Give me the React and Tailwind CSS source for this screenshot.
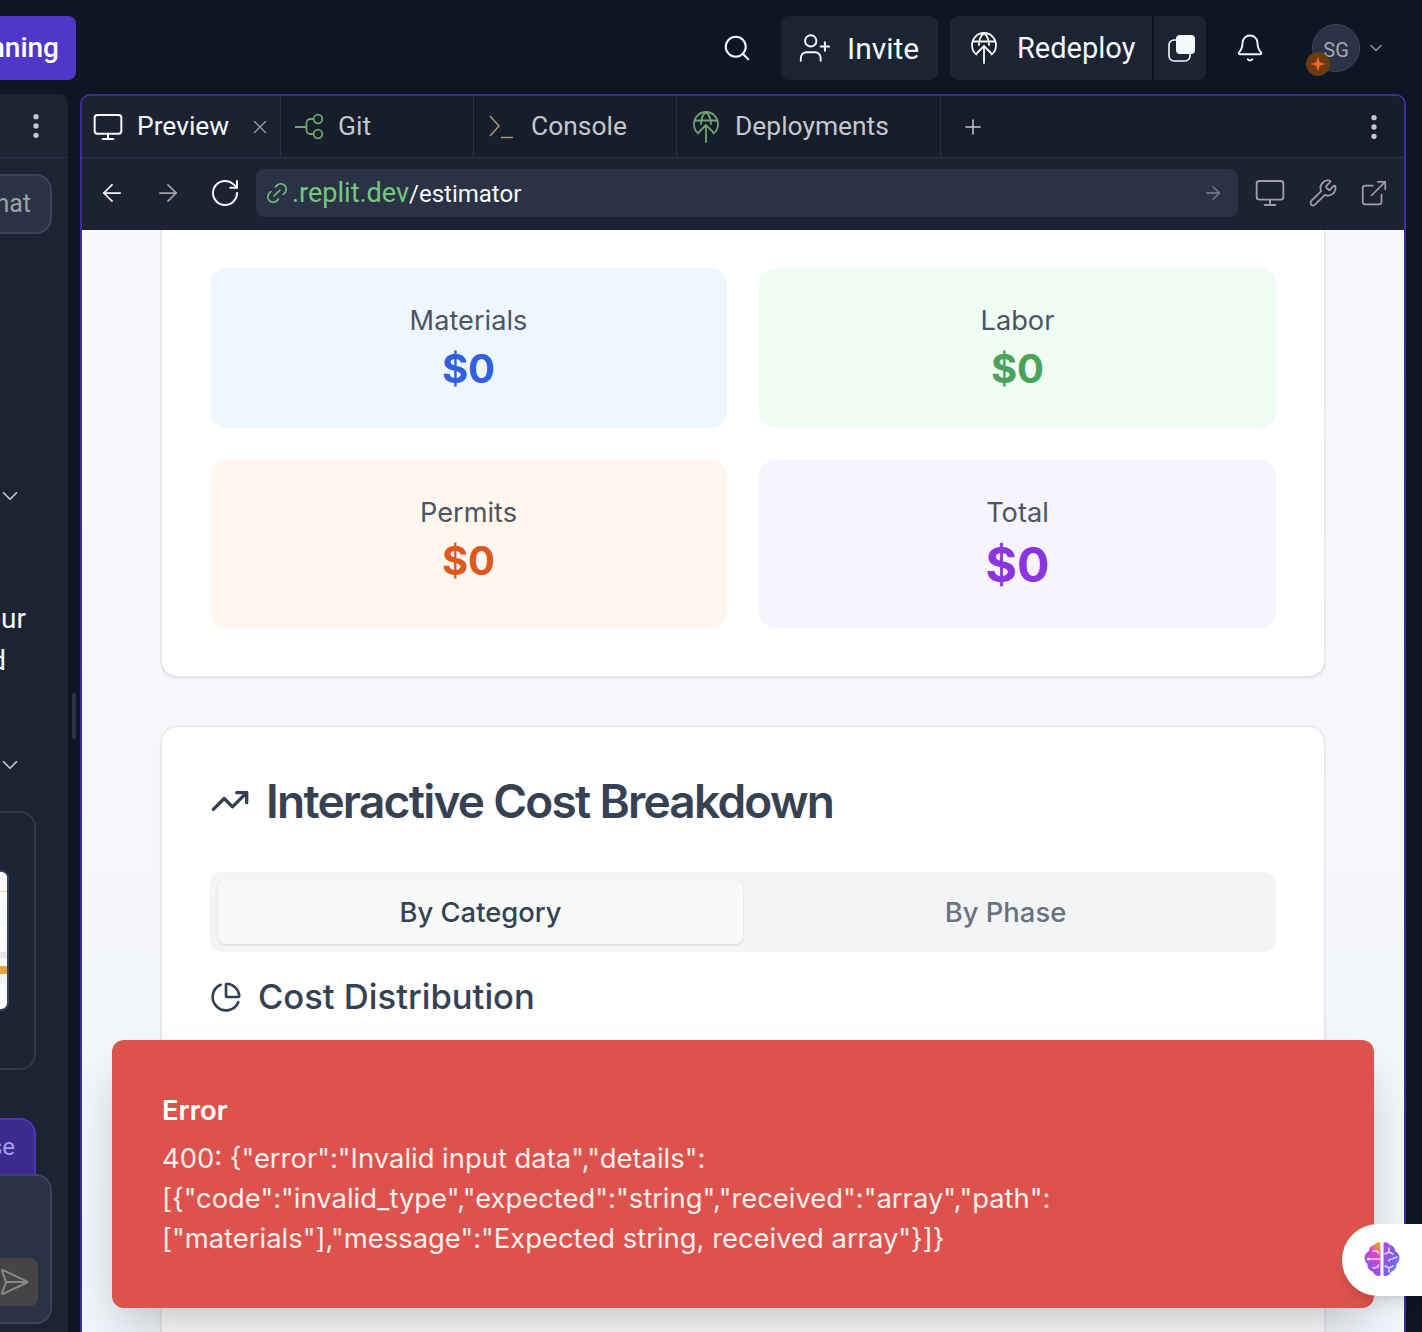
import React from "react";
import { Search, X, Plus, MoreVertical, ArrowLeft, ArrowRight, RotateCw, Link2, Monitor, Wrench, ExternalLink, Bell, ChevronDown, TrendingUp, PieChart, SendHorizontal, UserPlus } from "lucide-react";

const ui = { fontFamily: "Roboto, 'Noto Sans', sans-serif" };
const inter = { fontFamily: "Inter, sans-serif" };

function GitIcon() {
  return (
    <svg width="32" height="32" viewBox="0 0 32 32" fill="none" stroke="#6ea572" strokeWidth="1.8">
      <path d="M2 16h11.500M20.500 8h-3a4 4 0 0 0-4 4v7a4 4 0 0 0 4 4h3" />
      <circle cx="25" cy="8" r="4.300" />
      <circle cx="25" cy="23" r="4.300" />
    </svg>
  );
}

function ConsoleIcon() {
  return (
    <svg width="28" height="28" viewBox="0 0 28 28" fill="none" stroke="#a3976b" strokeWidth="1.6">
      <path d="M2 3l9 10-9 10M13 24.500h12" />
    </svg>
  );
}

function DeployIcon({ color }) {
  return (
    <svg width="28" height="34" viewBox="0 0 28 34" fill="none" stroke={color} strokeWidth="1.800" strokeLinecap="round">
      <path d="M6.500 23.500C3.500 21.500 2 18 2 14a12 12 0 0 1 24 0c0 4-1.500 7.500-4.500 9.500" />
      <path d="M14 2c-3.500 3-5 7-5 12M14 2c3.500 3 5 7 5 12M3 10.500h22" />
      <path d="M14 32V15M7 22l7-7 7 7" />
    </svg>
  );
}

function Spark() {
  return (
    <svg width="16" height="16" viewBox="0 0 16 16" fill="#f26522">
      <path d="M8 0l1.700 6.300L16 8l-6.300 1.700L8 16l-1.700-6.300L0 8l6.300-1.700z" />
    </svg>
  );
}

function CopyIcon() {
  return (
    <svg width="30" height="30" viewBox="0 0 30 30" fill="none">
      <rect x="2" y="7" width="21" height="21" rx="5" stroke="#f5f9fc" strokeWidth="1.6" />
      <rect x="9" y="2" width="19" height="19" rx="4" fill="#f5f9fc" />
    </svg>
  );
}

function BrainIcon() {
  return (
    <svg width="40" height="40" viewBox="0 0 40 40" fill="none">
      <defs>
        <linearGradient id="brainL" x1="0.800" y1="0" x2="0.300" y2="1">
          <stop offset="0" stopColor="#f5a524" />
          <stop offset="0.35" stopColor="#d946c8" />
          <stop offset="1" stopColor="#6f5cf0" />
        </linearGradient>
        <linearGradient id="brainR" x1="0" y1="0" x2="1" y2="1">
          <stop offset="0" stopColor="#a34ee8" />
          <stop offset="0.6" stopColor="#7c5cf0" />
          <stop offset="1" stopColor="#3fb2f5" />
        </linearGradient>
      </defs>
      <path d="M18.500 2c-3 0-5 1-6.500 3-3 .500-5 3-5 6-3 1.500-4.500 4-4.500 7 0 2.500 1 4.500 3 6-.500 3.500 2 6.500 5 7.500 1.500 3 4 4.500 6.500 4.500 1 0 1.500-.500 1.500-1.500V3.500c0-1-.500-1.500-1-1.500z" fill="url(#brainL)" />
      <path d="M21.500 2c3 0 5 1 6.500 3 3 .500 5 3 5 6 3 1.500 4.500 4 4.500 7 0 2.500-1 4.500-3 6 .500 3.500-2 6.500-5 7.500-1.500 3-4 4.500-6.500 4.500-1 0-1.500-.500-1.500-1.500V3.500c0-1 .500-1.500 1-1.500z" fill="url(#brainR)" />
      <g stroke="#f3e8ff" strokeWidth="1.600" strokeLinecap="round" fill="none" opacity="0.85">
        <path d="M7 19h11M11 11h3c1.500 0 2.500 1 2.500 2.500M11 28c2 0 5.500 0 5.500-3" />
        <path d="M27 8v4l-4 2M27 12l4 2M35 17l-5 2c-2 0-3 1-3 2M27 28v4M27 28l-4-2M27 28l4-2" />
      </g>
      <circle cx="6.500" cy="19" r="1.500" fill="#f3e8ff" />
    </svg>
  );
}

function Tab({ icon, label, width, active, children }) {
  return (
    <div className={`flex h-full items-center border-r border-[#2b3245] ${active ? "bg-[#1c2232] text-[#f5f9fc]" : "text-[#c2c8cc]"} ${width}`}>
      {icon}
      <span className="text-[26.400px] leading-none">{label}</span>
      {children}
    </div>
  );
}

function Tile({ bg, label, color, big, height }) {
  return (
    <div className={`flex flex-col items-center rounded-[16px] pt-[33px] ${bg} ${height}`}>
      <div className="text-[27.200px] leading-[40px] text-[#4b5563]">{label}</div>
      <div className={`font-bold ${color} ${big ? "text-[48px] leading-[48px] mt-[8px]" : "text-[40px] leading-[48px] mt-[4px]"}`}>$0</div>
    </div>
  );
}

export default function App() {
  return (
    <div className="relative h-[1332px] w-[1422px] overflow-hidden bg-[#0e1525]" style={ui}>
      {/* top bar */}
      <header className="flex h-[94px] items-start pt-[16px]">
        <div className="ml-[-60px] flex h-[64px] w-[136px] items-center justify-end rounded-[8px] bg-[#4f38c9] pr-[17px] text-[28px] font-medium text-white">
          Running
        </div>
        <div className="ml-auto flex h-[64px] items-center text-[#f5f9fc]">
          <Search size={30} strokeWidth={1.6} />
          <div className="ml-[29px] flex h-[64px] w-[157px] items-center rounded-[8px] bg-[#1c2333] pl-[17px]">
            <UserPlus size={34} strokeWidth={1.4} />
            <span className="ml-[15px] text-[30px]">Invite</span>
          </div>
          <div className="ml-[12px] flex h-[64px] w-[202px] items-center rounded-l-[8px] bg-[#1c2333] pl-[20px]">
            <DeployIcon color="#f5f9fc" />
            <span className="ml-[19px] pt-[2px] text-[29px]">Redeploy</span>
          </div>
          <div className="ml-[2px] flex h-[64px] w-[52px] items-center justify-center rounded-r-[8px] bg-[#1c2333] pl-[3px]">
            <CopyIcon />
          </div>
          <Bell size={30} strokeWidth={1.5} className="ml-[29px]" />
          <div className="relative ml-[47px] flex h-[48px] w-[48px] items-center justify-center rounded-full border border-[#3c445c] bg-[#2b3245] pt-[3px] text-[20px] text-[#a3a8ad]">
            SG
            <span className="absolute left-[-7px] top-[27px] flex h-[24px] w-[24px] items-center justify-center rounded-full bg-[#6b3a10]">
              <Spark />
            </span>
          </div>
          <ChevronDown size={20} strokeWidth={1.5} className="ml-[6px] mr-[36px] text-[#9da2a6]" />
        </div>
      </header>

      <div className="flex h-[1238px]">
        {/* left panel, mostly cropped */}
        <aside className="flex w-[68px] flex-col items-end overflow-hidden rounded-tr-[8px] bg-[#1c2333]">
          <div className="flex h-[64px] w-full shrink-0 items-center justify-end border-b border-[#2b3245] pr-[16px] text-[#c2c8cc]">
            <MoreVertical size={32} strokeWidth={2} />
          </div>
          <div className="mr-[16px] mt-[16px] flex h-[60px] w-[160px] shrink-0 items-center justify-end whitespace-nowrap rounded-[16px] border-2 border-[#3c445c] bg-[#2b3245] pr-[19px] text-[25px] text-[#9da2a6]">
            New Chat
          </div>
          <ChevronDown size={26} strokeWidth={1.6} className="mr-[45px] mt-[249px] shrink-0 text-[#c2c8cc]" />
          <div className="mr-[42px] mt-[89px] shrink-0 whitespace-nowrap text-[28px] leading-[42px] text-[#f5f9fc]">your</div>
          <div className="mr-[62px] shrink-0 whitespace-nowrap text-[28px] leading-[42px] text-[#f5f9fc]">and</div>
          <ChevronDown size={26} strokeWidth={1.6} className="mr-[45px] mt-[70px] shrink-0 text-[#c2c8cc]" />
          <div className="mr-[32px] mt-[33px] flex h-[259px] w-[220px] shrink-0 items-center justify-end rounded-[16px] border-2 border-[#2f3a45] pr-[25px]">
            <div className="h-[141px] w-[120px] overflow-hidden rounded-[8px] border-2 border-[#3c445c] bg-white">
              <div className="h-[20px] border-b border-[#e8d9a0] bg-[#fafafa]" />
              <div className="mt-[8px] h-[26px] bg-[#f8f9fc]" />
              <div className="mt-[26px] h-[6px] bg-[#e8e8ec]" />
              <div className="mt-[8px] h-[8px] bg-[#e8a33a]" />
              <div className="h-[10px] bg-[#f2f3f5]" />
            </div>
          </div>
          <div className="mr-[32px] mt-[48px] flex h-[72px] w-[120px] shrink-0 items-start justify-end rounded-t-[16px] border-2 border-b-0 border-[#4c35c0] bg-[#3c2a8f] pr-[19px] pt-[9px] text-[24px] text-[#a89cf5]">
            Pause
          </div>
          <div className="relative mr-[16px] mt-[-16px] flex h-[150px] w-[200px] shrink-0 items-end justify-end rounded-[16px] border-2 border-[#3c445c] bg-[#2b3245] pb-[16px] pr-[12px]">
            <div className="flex h-[48px] w-[70px] items-center justify-end rounded-[8px] bg-[#454545] pr-[8px]">
              <SendHorizontal size={32} strokeWidth={1.4} className="text-[#8a8a8a]" />
            </div>
          </div>
        </aside>

        {/* drag gutter */}
        <div className="flex w-[12px] shrink-0 items-center justify-center pt-[6px]">
          <div className="h-[46px] w-[4px] rounded-full bg-[#2b3245]" />
        </div>

        {/* preview pane */}
        <main className="flex w-[1326px] shrink-0 flex-col overflow-hidden rounded-t-[10px] border-x-2 border-t-2 border-[#3d2f9a] bg-[#1c2232]">
          <div className="flex h-[62px] shrink-0 items-center border-b border-[#2b3245] bg-[#181d2b]">
            <Tab width="w-[199px] pl-[10px]" active label="Preview" icon={<Monitor size={32} strokeWidth={1.5} className="mr-[13px]" />}>
              <X size={22} strokeWidth={1.3} className="ml-[20px] text-[#9da2a6]" />
            </Tab>
            <Tab width="w-[193px] pl-[12px]" label="Git" icon={<span className="mr-[13px] flex"><GitIcon /></span>} />
            <Tab width="w-[203px] pl-[14px]" label="Console" icon={<span className="mr-[15px] flex"><ConsoleIcon /></span>} />
            <Tab width="w-[264px] pl-[15px]" label="Deployments" icon={<span className="mr-[15px] flex"><DeployIcon color="#6ea572" /></span>} />
            <Plus size={24} strokeWidth={1.5} className="ml-[20px] text-[#c2c8cc]" />
            <MoreVertical size={32} strokeWidth={2} className="ml-auto mr-[14px] text-[#c2c8cc]" />
          </div>

          <div className="flex h-[72px] shrink-0 items-center pb-[2px]">
            <ArrowLeft size={28} strokeWidth={1.5} className="ml-[16px] text-[#f5f9fc]" />
            <ArrowRight size={28} strokeWidth={1.5} className="ml-[28px] text-[#9da2a6]" />
            <RotateCw size={32} strokeWidth={1.5} className="ml-[27px] text-[#f5f9fc]" />
            <div className="ml-[15px] flex h-[48px] w-[982px] items-center rounded-[8px] bg-[#2b3245] pl-[8px] pr-[14px]">
              <Link2 size={26} strokeWidth={1.4} className="-rotate-45 text-[#73c97a]" />
              <span className="ml-[2px] pt-[1px] text-[27px] text-[#73c97a]">.replit.dev</span>
              <span className="pt-[1px] text-[24px] text-[#f5f9fc]">/estimator</span>
              <ArrowRight size={22} strokeWidth={1.4} className="ml-auto text-[#7f8489]" />
            </div>
            <Monitor size={32} strokeWidth={1.4} className="ml-[16px] text-[#9da2a6]" />
            <Wrench size={30} strokeWidth={1.4} className="ml-[22px] text-[#9da2a6]" />
            <ExternalLink size={30} strokeWidth={1.4} className="ml-[21px] text-[#9da2a6]" />
          </div>

          <div className="flex-1 overflow-hidden bg-gradient-to-b from-[#f8f9fc] to-[#f2f5fb] px-[79px]" style={inter}>
            <section className="-mt-[16px] rounded-[16px] border border-[#e5e7eb] bg-white px-[48px] pb-[48px] pt-[53px] shadow-sm">
              <div className="grid grid-cols-2 gap-[32px]">
                <Tile bg="bg-[#eff6ff]" height="h-[160px]" label="Materials" color="text-[#3060e0]" />
                <Tile bg="bg-[#f0fdf4]" height="h-[160px]" label="Labor" color="text-[#4aa35a]" />
                <Tile bg="bg-[#fff7ed]" height="h-[168px]" label="Permits" color="text-[#e0581f]" />
                <Tile bg="bg-[#f7f4fe]" height="h-[168px]" label="Total" color="text-[#8b35e0]" big />
              </div>
            </section>

            <section className="mt-[49px] rounded-[16px] border border-[#e5e7eb] bg-white px-[48px] pt-[48px] shadow-sm">
              <div className="flex h-[52px] items-center">
                <TrendingUp size={40} strokeWidth={2} className="text-[#334155]" />
                <h2 className="ml-[16px] whitespace-nowrap text-[46px] font-semibold tracking-[-1.750px] text-[#364153]">Interactive Cost Breakdown</h2>
              </div>
              <div className="mt-[45px] grid h-[80px] grid-cols-2 rounded-[12px] bg-[#f3f4f6] p-[8px] text-[27.400px] font-medium">
                <div className="flex items-center justify-center rounded-[8px] bg-[#f8fafa] pt-[1px] text-[#364153] shadow-sm">By Category</div>
                <div className="flex items-center justify-center pt-[1px] text-[#6b7280]">By Phase</div>
              </div>
              <div className="mt-[22px] flex h-[46px] items-center">
                <PieChart size={32} strokeWidth={2} className="text-[#334155]" />
                <h3 className="ml-[16px] text-[34.600px] font-medium text-[#364153]">Cost Distribution</h3>
              </div>
              <div className="h-[400px]" />
            </section>
          </div>
        </main>
      </div>

      {/* toast */}
      <div className="absolute left-[112px] top-[1040px] h-[268px] w-[1262px] rounded-[12px] bg-[#dd524c] px-[50px] pt-[50px] text-white shadow-2xl" style={inter}>
        <div className="text-[27.400px] font-semibold leading-[40px]">Error</div>
        <div className="mt-[8px] text-[27.400px] leading-[40px] text-white/90">
          400: {'{"error":"Invalid input data","details":'}
          <br />
          {'[{"code":"invalid_type","expected":"string","received":"array","path":'}
          <br />
          {'["materials"],"message":"Expected string, received array"}]}'}
        </div>
      </div>

      {/* floating assistant button */}
      <div className="absolute left-[1342px] top-[1224px] flex h-[72px] w-[100px] items-center rounded-l-full bg-white pl-[20px] shadow-lg">
        <BrainIcon />
      </div>
    </div>
  );
}
